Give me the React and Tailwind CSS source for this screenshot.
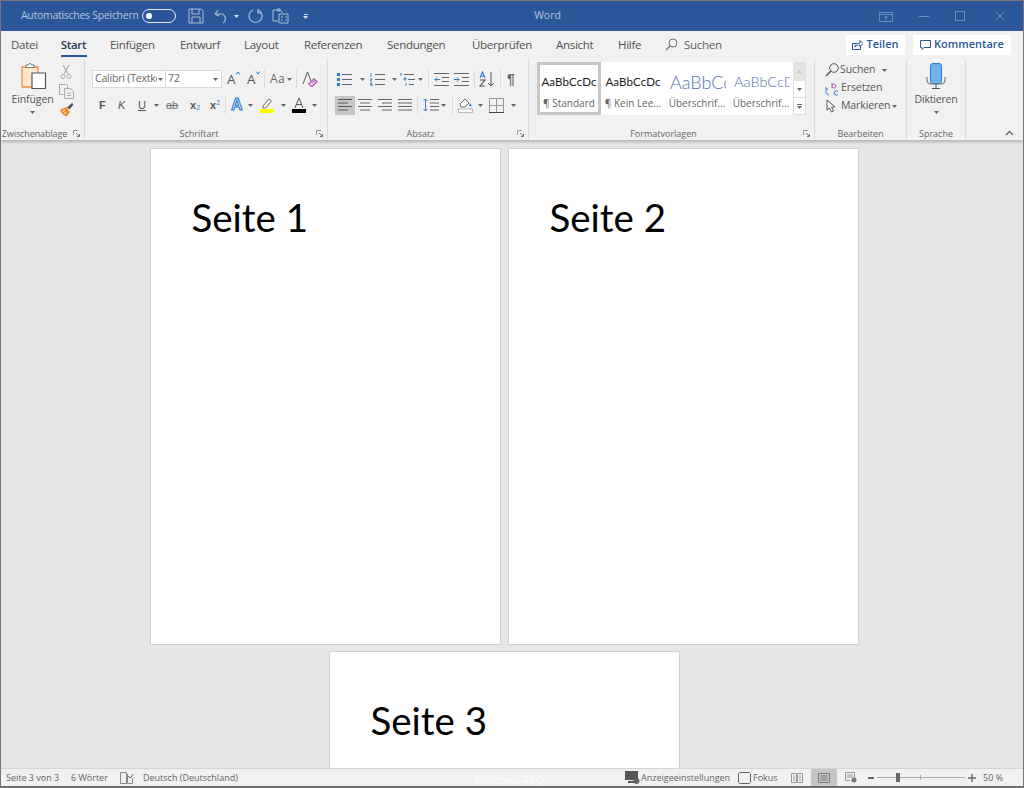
import React from "react";

const Ic = ({ w = 16, h = 16, ml = "", className = "", children, ...r }) => (
  <svg width={w} height={h} viewBox={`0 0 ${w} ${h}`} fill="none" className={`shrink-0 ${ml} ${className}`} {...r}>{children}</svg>
);
const Caret = ({ className = "", color = "#666" }) => (
  <svg width="5" height="3" viewBox="0 0 5 3" className={`shrink-0 ${className}`}><path d="M0 0h5L2.5 3z" fill={color} /></svg>
);
const Sep = ({ className = "" }) => <div className={`w-px h-[20px] bg-[#dcdcdc] shrink-0 ${className}`} />;
const Launcher = () => (
  <svg width="7" height="7" viewBox="0 0 7 7" className="shrink-0">
    <path d="M0.5 5V.5H5" stroke="#999" fill="none" /><path d="M3 3l3.5 3.5M6.5 4v2.5H4" stroke="#777" fill="none" />
  </svg>
);
const Lines = ({ rows, color = "#666" }) => rows.map(([x, y, l], i) => <path key={i} d={`M${x} ${y}h${l}`} stroke={color} />);

const Tab = ({ children, className = "" }) => <span className={`whitespace-nowrap ${className}`}>{children}</span>;

const Group = ({ w, label, launcher, labelClass = "", children }) => (
  <div className="flex flex-col shrink-0 h-full border-r border-[#dadada] my-0" style={{ width: w }}>
    <div className="h-[68px]">{children}</div>
    <div className="h-[12px] relative flex items-center justify-center text-[9px] leading-none text-[#666]">
      <span className={labelClass}>{label}</span>
      {launcher && <span className="absolute right-[4px] top-[3px] flex"><Launcher /></span>}
    </div>
  </div>
);

const BoldA = ({ up, ml }) => (
  <span className={`relative w-[14px] h-[16px] shrink-0 text-[13.5px] leading-[16px] text-[#555] ${ml}`}>
    A
    <svg width="6" height="4" viewBox="0 0 6 4" className="absolute top-0 left-[8px]">
      <path d={up ? "M1 3.500L3 1l2 2.500" : "M1 .5L3 3l2-2.500"} stroke="#2b7cd3" fill="none" />
    </svg>
  </span>
);

const Style = ({ sample, name, cls, selected, w }) => (
  <div className={`flex flex-col items-center overflow-hidden shrink-0 h-full ${selected ? "border-[3px] border-[#c6c6c6]" : "border-[3px] border-white"}`} style={{ width: w }}>
    <div className={`h-[32px] pt-[2px] flex items-center justify-center whitespace-nowrap overflow-hidden w-full ${cls}`}>{sample}</div>
    <div className="text-[10px] leading-[12px] text-[#666] whitespace-nowrap">{name}</div>
  </div>
);

export default function App() {
  return (
    <div className="w-[1024px] h-[788px] overflow-hidden flex flex-col relative bg-[#e6e6e6] border-x border-x-[#777] border-t border-t-[#777] border-b-2 border-b-[#6e6e6e] font-['Open_Sans','Noto_Sans',sans-serif]">
      {/* Title bar */}
      <div className="h-[30px] shrink-0 bg-[#2b579a] flex items-center text-[10.5px] relative">
        <span className="ml-[20px] w-[118px] whitespace-nowrap text-[#b3c3dc] tracking-[-0.28px]">Automatisches Speichern</span>
        <div className="ml-[3px] w-[34px] h-[14px] rounded-full border border-[#e6ecf5] flex items-center pl-[3px]">
          <div className="w-[6px] h-[6px] rounded-full bg-white" />
        </div>
        <Ic w={16} h={16} ml="ml-[12px]">
          <path d="M1 1h12l2 2v12H1z M4 1v5h7V1 M4 15V9h8v6" stroke="#a9bbd6" />
        </Ic>
        <Ic w={15} h={15} ml="ml-[10px]">
          <path d="M4 1L1 5l4 2M1.5 5H8a5 5 0 0 1 1 9" stroke="#a9bbd6" strokeWidth="1.2" />
        </Ic>
        <Caret color="#d5deec" className="ml-[5px]" />
        <Ic w={16} h={16} ml="ml-[8px]">
          <path d="M5 2a6.5 6.5 0 1 0 5 0M5 1v4H1" stroke="#a9bbd6" strokeWidth="1.2" transform="matrix(-1 0 0 1 16 0)" />
        </Ic>
        <Ic w={17} h={16} ml="ml-[9px]">
          <path d="M1 2h7l2 2v1M1 2v11h5M5 1h3v2H5 M7 6h9v9H7z M9 9h2M9 12h2M13 9h2M13 12h2" stroke="#a9bbd6" />
        </Ic>
        <div className="ml-[14px] flex flex-col items-center gap-[1px]">
          <div className="w-[4px] h-px bg-[#d5deec]" />
          <Caret color="#d5deec" />
        </div>
        <div className="flex-1 flex justify-center pr-[92px]">
          <span className="text-[#b3c3dc] text-[10.5px]">Word</span>
        </div>
        <Ic w={14} h={12} ml="mr-[26px]">
          <path d="M.5 2.5h13v9H.5zM.5 4.5h13M7 10.5V6M5 8l2-2 2 2" stroke="#6f8dbb" />
        </Ic>
        <div className="w-[10px] h-px bg-[#6f8dbb] mr-[26px]" />
        <div className="w-[10px] h-[10px] border border-[#6f8dbb] mr-[30px]" />
        <Ic w={10} h={10} ml="mr-[18px]">
          <path d="M.5.5l9 9M9.5.5l-9 9" stroke="#6f8dbb" />
        </Ic>
      </div>

      {/* Tabs */}
      <div className="h-[27px] shrink-0 bg-[#f1f1f1] flex items-center text-[11.5px] text-[#505050] tracking-[-0.28px]">
        <Tab className="ml-[10px] w-[26px]">Datei</Tab>
        <div className="ml-[23px] w-[27px] h-[27px] flex flex-col items-center justify-between pt-[6px]">
          <span className="font-semibold text-[#2b3a55] text-[11.5px] leading-[16px] whitespace-nowrap">Start</span>
          <div className="w-[26px] h-[2.5px] bg-[#2b579a] mb-[1px]" />
        </div>
        <Tab className="ml-[23px] w-[70px]">Einfügen</Tab>
        <Tab className="w-[64px]">Entwurf</Tab>
        <Tab className="w-[60px]">Layout</Tab>
        <Tab className="w-[83px]">Referenzen</Tab>
        <Tab className="w-[85px]">Sendungen</Tab>
        <Tab className="w-[84px]">Überprüfen</Tab>
        <Tab className="w-[62px]">Ansicht</Tab>
        <Tab className="w-[47px]">Hilfe</Tab>
        <Ic w={13} h={13}>
          <circle cx="8" cy="5" r="4" stroke="#707070" /><path d="M5 8l-4 4" stroke="#707070" strokeWidth="1.3" />
        </Ic>
        <Tab className="ml-[6px] text-[#606060]">Suchen</Tab>
        <div className="flex-1" />
        <div className="w-[59px] h-[20px] bg-white flex items-center justify-center gap-[3px] text-[#2b579a] font-semibold text-[11px] tracking-normal">
          <Ic w={11} h={11}><path d="M.5 4.5h4M.5 4.5v6h8V7M3 8c0-3 2-4 5-4V1.5l3 3-3 3V6C6 6 4.5 6.5 3 8z" stroke="#2b579a" /></Ic>
          Teilen
        </div>
        <div className="ml-[8px] mr-[12px] w-[98px] h-[20px] bg-white flex items-center justify-center gap-[3px] text-[#2b579a] font-semibold text-[11px] tracking-normal">
          <Ic w={11} h={11}><path d="M.5 1.5h10v7H4L2 10.500V8.500H.5z" stroke="#2b579a" /></Ic>
          Kommentare
        </div>
      </div>

      {/* Ribbon */}
      <div className="h-[82px] shrink-0 bg-[#f1f1f1] flex items-stretch py-[1px] relative z-10 shadow-[0_2px_3px_rgba(0,0,0,0.22)]">
        {/* Zwischenablage */}
        <Group w={84} label="Zwischenablage" launcher labelClass="-ml-[16px] tracking-[-0.1px]">
          <div className="flex h-full">
            <div className="w-[53px] ml-[5px] flex flex-col items-center pt-[4px]">
              <Ic w={26} h={28} ml="ml-[2px]">
                <path d="M1 4h16v20H1z" fill="#fce6cf" stroke="#e8913f" strokeWidth="1.3" />
                <path d="M5 4V2h2.500a1.500 1.500 0 0 1 3 0H13v2.500H5z" fill="#fff" stroke="#777" />
                <path d="M11 10h13.500v15.500H11z" fill="#fff" stroke="#555" strokeWidth="1.2" />
              </Ic>
              <span className="text-[10.5px] leading-[13px] mt-[2px] text-[#555] whitespace-nowrap tracking-[-0.1px]">Einfügen</span>
              <Caret className="mt-[5px]" />
            </div>
            <div className="flex flex-col items-start pt-[5px]">
              <Ic w={12} h={16} ml="ml-[1px]">
                <path d="M3 1l5 9M9 1l-5 9" stroke="#aaa" strokeWidth="1.1" />
                <circle cx="3" cy="12.500" r="2" stroke="#aaa" /><circle cx="9" cy="12.500" r="2" stroke="#aaa" />
              </Ic>
              <Ic w={15} h={15} ml="mt-[4px]">
                <path d="M.5.5h7l1 1V4M.5.5v10h4" stroke="#aaa" /><path d="M5.500 4.500h6l3 3v7h-9z M8 9h4M8 11.500h4" stroke="#aaa" />
              </Ic>
              <Ic w={15} h={15} ml="mt-[3px]">
                <path d="M1 8l6-3 4 5-3 4C6 14 3 13 1 8z" fill="#ed8b2b" /><path d="M3.500 9.500L6 8M5 12l2-2" stroke="#fff" />
                <path d="M8 5.500L13 1l1.500 1.500-4 5z" fill="#555" />
              </Ic>
            </div>
          </div>
        </Group>

        {/* Schriftart */}
        <Group w={243} label="Schriftart" launcher labelClass="-ml-[14px]">
          <div className="flex items-center h-[20px] mt-[10px] pl-[7px]">
            <div className="w-[74px] h-[18px] bg-white border border-[#d9d9d9] flex items-center pl-[2px] pr-[2px] text-[10.5px] text-[#666] overflow-hidden">
              <span className="w-[63px] mr-[1px] overflow-hidden whitespace-nowrap tracking-[-0.2px]">Calibri (Textkö</span>
              <Caret />
            </div>
            <div className="w-[56px] h-[18px] bg-white border border-[#d9d9d9] border-l-0 flex items-center justify-between pl-[2px] pr-[3px] text-[10.5px] text-[#666]">
              72<Caret />
            </div>
            <BoldA up ml="ml-[5px]" />
            <BoldA ml="ml-[6px]" />
            <Sep className="ml-[3px] !h-[18px]" />
            <span className="ml-[5px] text-[12px] text-[#666] leading-none tracking-[0.5px]">Aa</span>
            <Caret className="ml-[2px]" />
            <Sep className="ml-[4px] !h-[18px]" />
            <Ic w={16} h={16} ml="ml-[5px]">
              <path d="M1 13L5.500 1 9 10" stroke="#555" />
              <path d="M7 13l5-5 3 2.500-4.500 4.500H9z" fill="#fff" stroke="#b455b0" strokeWidth="1.4" />
              <path d="M10 13l-1.500-1.500 3.500-3.500 2 2z" fill="#d18ad0" />
            </Ic>
          </div>
          <div className="flex items-center h-[20px] mt-[6px] pl-[14px] text-[#555]">
            <span className="w-[8px] text-[11px] font-bold leading-none font-['Liberation_Sans']">F</span>
            <span className="ml-[11px] w-[8px] text-[11px] italic leading-none font-['Liberation_Sans']">K</span>
            <span className="ml-[12px] w-[10px] text-[11px] underline leading-none font-['Liberation_Sans']">U</span>
            <Caret className="ml-[6px]" />
            <span className="ml-[7px] w-[14px] text-[11px] line-through leading-none text-[#777] font-['Liberation_Sans']">ab</span>
            <span className="ml-[10px] w-[12px] text-[11px] font-bold leading-none font-['Liberation_Sans']">x<sub className="text-[7px] text-[#2b7cd3] font-normal">2</sub></span>
            <span className="ml-[8px] w-[12px] text-[11px] font-bold leading-none font-['Liberation_Sans']">x<sup className="text-[7px] text-[#2b7cd3] font-normal">2</sup></span>
            <Sep className="ml-[3px] !h-[17px]" />
            <span className="ml-[5px] w-[14px] text-[16px] font-bold leading-none text-[#cfe2f6] [-webkit-text-stroke:1px_#2b7cd3] font-['Liberation_Sans']">A</span>
            <Caret className="ml-[3px]" />
            <Ic w={14} h={16} ml="ml-[7px]">
              <path d="M3 9l6-7 2.500 2-6 7H3z" fill="#fff" stroke="#666" />
              <rect x="0" y="12" width="14" height="4" fill="#ffff00" />
            </Ic>
            <Caret className="ml-[7px]" />
            <Ic w={14} h={16} ml="ml-[6px]">
              <path d="M3 11L7 1l4 10M4.500 7.500h5" stroke="#555" />
              <rect x="0" y="12" width="14" height="4" fill="#000" />
            </Ic>
            <Caret className="ml-[6px]" />
          </div>
        </Group>

        {/* Absatz */}
        <Group w={201} label="Absatz" launcher labelClass="-ml-[15px]">
          <div className="flex items-center h-[20px] mt-[10px] pl-[9px]">
            <Ic w={15} h={13}>
              <rect x="0" y="0" width="3" height="3" fill="#2b7cd3" /><rect x="0" y="5" width="3" height="3" fill="#2b7cd3" /><rect x="0" y="10" width="3" height="3" fill="#2b7cd3" />
              <Lines rows={[[5, 1.5, 10], [5, 6.5, 10], [5, 11.5, 10]]} />
            </Ic>
            <Caret className="ml-[8px]" />
            <Ic w={15} h={13} ml="ml-[5px]">
              <path d="M1 0v4M0 6h2v1H0v1h2M0 10h2v3H0M0 11.500h2" stroke="#2b7cd3" strokeWidth=".8" />
              <Lines rows={[[5, 1.5, 10], [5, 6.5, 10], [5, 11.5, 10]]} />
            </Ic>
            <Caret className="ml-[7px]" />
            <Ic w={15} h={13} ml="ml-[3px]">
              <path d="M1 0v3M4 5h2v2H4zM6 10v3" stroke="#2b7cd3" strokeWidth=".9" />
              <Lines rows={[[4, 1.5, 10], [8, 6.5, 7], [9, 11.5, 5]]} />
            </Ic>
            <Caret className="ml-[3px]" />
            <Sep className="ml-[5px] !h-[18px]" />
            <Ic w={15} h={13} ml="ml-[5px]">
              <Lines rows={[[0, .5, 15], [8, 4.500, 7], [8, 8.500, 7], [0, 12.500, 15]]} />
              <path d="M6 6.500H1M3 4.500l-2 2 2 2" stroke="#2b7cd3" />
            </Ic>
            <Ic w={15} h={13} ml="ml-[5px]">
              <Lines rows={[[0, .5, 15], [8, 4.500, 7], [8, 8.500, 7], [0, 12.500, 15]]} />
              <path d="M0 6.500h5M3 4.500l2 2-2 2" stroke="#2b7cd3" />
            </Ic>
            <Sep className="ml-[5px] !h-[18px]" />
            <Ic w={16} h={16} ml="ml-[4px]">
              <path d="M1 7l2.500-6L6 7M2 5h3" stroke="#2b7cd3" strokeWidth="1.1" />
              <path d="M1 9h5L1 15h5" stroke="#555" strokeWidth="1.1" />
              <path d="M12 1v14M9 12l3 3 3-3" stroke="#555" />
            </Ic>
            <Sep className="ml-[5px] !h-[18px]" />
            <span className="ml-[6px] text-[14px] font-bold leading-none text-[#666] font-['Liberation_Sans']">¶</span>
          </div>
          <div className="flex items-center h-[20px] mt-[6px] pl-[7px]">
            <div className="w-[20px] h-[19px] bg-[#c6c6c6] flex items-center justify-center">
              <Ic w={14} h={12}><Lines rows={[[0, .5, 14], [0, 4, 10], [0, 7.500, 14], [0, 11, 10]]} color="#555" /></Ic>
            </div>
            <Ic w={14} h={12} ml="ml-[3px]"><Lines rows={[[0, .5, 14], [2, 4, 10], [0, 7.500, 14], [2, 11, 10]]} /></Ic>
            <Ic w={14} h={12} ml="ml-[6px]"><Lines rows={[[0, .5, 14], [4, 4, 10], [0, 7.500, 14], [4, 11, 10]]} /></Ic>
            <Ic w={14} h={12} ml="ml-[6px]"><Lines rows={[[0, .5, 14], [0, 4, 14], [0, 7.500, 14], [0, 11, 14]]} /></Ic>
            <Sep className="ml-[5px] !h-[18px]" />
            <Ic w={16} h={14} ml="ml-[5px]">
              <path d="M2.500 1v12M.5 3l2-2 2 2M.5 11l2 2 2-2" stroke="#2b7cd3" />
              <Lines rows={[[7, 1.500, 9], [7, 5, 9], [7, 8.500, 9], [7, 12, 9]]} />
            </Ic>
            <Caret className="ml-[2px]" />
            <Sep className="ml-[6px] !h-[18px]" />
            <Ic w={15} h={16} ml="ml-[5px]">
              <path d="M2 7l5-5 4 4-4 4H3z" fill="#fff" stroke="#666" />
              <path d="M12 6l2 3h-3z" fill="#2b7cd3" />
              <rect x=".5" y="12" width="14" height="3.500" fill="#fff" stroke="#bbb" />
            </Ic>
            <Caret className="ml-[5px]" />
            <Ic w={15} h={15} ml="ml-[6px]">
              <path d="M.5.5h14v14H.5zM7.500.5v14M.5 7.500h14" stroke="#999" /><path d="M0 14.500h15" stroke="#444" />
            </Ic>
            <Caret className="ml-[7px]" />
          </div>
        </Group>

        {/* Formatvorlagen */}
        <Group w={286} label="Formatvorlagen" launcher labelClass="-ml-[16px]">
          <div className="flex pl-[8px] pt-[3px] h-[56px]">
            <div className="w-[256px] h-[53px] bg-white flex items-stretch">
              <Style w={64} selected sample="AaBbCcDc" name="¶ Standard" cls="text-[11.5px] text-[#222] font-['Lato','Open_Sans',sans-serif] tracking-[0.1px]" />
              <Style w={64} sample="AaBbCcDc" name="¶ Kein Lee..." cls="text-[11.5px] text-[#222] font-['Lato','Open_Sans',sans-serif] tracking-[0.1px]" />
              <Style w={64} sample="AaBbCc" name="Überschrif..." cls="text-[18px] font-light text-[#4f74b3] !justify-start pl-[2px] font-['Lato','Open_Sans',sans-serif]" />
              <Style w={64} sample="AaBbCcD" name="Überschrif..." cls="text-[14.5px] font-light text-[#4f74b3] !justify-start pl-[2px] font-['Lato','Open_Sans',sans-serif]" />
            </div>
            <div className="w-[13px] h-[53px] flex flex-col">
              <div className="h-[19px] bg-[#e3e3e3] flex items-center justify-center"><Caret color="#c4c4c4" className="rotate-180" /></div>
              <div className="h-[17px] bg-white border-x border-b border-[#ddd] flex items-center justify-center"><Caret /></div>
              <div className="h-[17px] bg-white border-x border-b border-[#ddd] flex flex-col items-center justify-center gap-[1px]"><div className="w-[5px] h-px bg-[#666]" /><Caret /></div>
            </div>
          </div>
        </Group>

        {/* Bearbeiten */}
        <Group w={92} label="Bearbeiten">
          <div className="flex flex-col pl-[10px] pt-[1px] text-[10.5px] text-[#555] tracking-[-0.1px]">
            <div className="flex items-center h-[18px] mt-[1px]">
              <Ic w={14} h={14}><circle cx="9" cy="5" r="4.300" stroke="#555" /><path d="M6 8l-5 5" stroke="#555" strokeWidth="1.400" /></Ic>
              <span className="ml-[1px]">Suchen</span><Caret className="ml-[7px]" />
            </div>
            <div className="flex items-center h-[18px]">
              <Ic w={14} h={15}>
                <path d="M7 2v5M7 4.500a2 2 0 1 1 0 1" stroke="#b455b0" />
                <path d="M13 10.500a2.200 2.200 0 1 0 0 3" stroke="#2b7cd3" />
                <path d="M4 14C1 13 0 10 1.500 8M3 8H1V6" stroke="#2b7cd3" />
              </Ic>
              <span className="ml-[2px]">Ersetzen</span>
            </div>
            <div className="flex items-center h-[18px]">
              <Ic w={11} h={14} ml="ml-[1px]"><path d="M1 1v10l2.500-2 2 4 2-1-2-4H9z" fill="#fff" stroke="#555" /></Ic>
              <span className="ml-[4px]">Markieren</span><Caret className="ml-[2px]" />
            </div>
          </div>
        </Group>

        {/* Sprache */}
        <Group w={59} label="Sprache">
          <div className="flex flex-col items-center pt-[4px]">
            <Ic w={20} h={27}>
              <rect x="4.500" y=".5" width="11" height="20" rx="2.500" fill="#73b4ea" stroke="#2b7cd3" />
              <path d="M1 14v3a4 4 0 0 0 4 4h10a4 4 0 0 0 4-4v-3" stroke="#777" strokeWidth="1.200" />
              <path d="M10 21v4M6 25.500h8" stroke="#555" />
            </Ic>
            <span className="text-[10.5px] leading-[13px] mt-[3px] text-[#555] tracking-[-0.2px]">Diktieren</span>
            <Caret className="mt-[5px]" />
          </div>
        </Group>
        <div className="flex-1 flex items-end justify-end pr-[9px] pb-[3px]">
          <Ic w={9} h={6}><path d="M1 5l3.500-3.500L8 5" stroke="#666" strokeWidth="1.300" /></Ic>
        </div>
      </div>

      {/* Document */}
      <div className="flex-1 min-h-0 overflow-hidden flex flex-wrap content-start justify-center gap-x-[7px] gap-y-[6px] pt-[8px] pr-[16px] bg-[#e6e6e6]">
        {["Seite 1", "Seite 2"].map((t) => (
          <div key={t} className="w-[351px] h-[497px] bg-white border border-[#d2d2d2] pl-[41px] pt-[41px] text-[38.5px] leading-[54px] text-black font-['Lato',sans-serif]">{t}</div>
        ))}
        <div className="w-[351px] h-[200px] bg-white border border-[#d2d2d2] pl-[41px] pt-[41px] text-[38.5px] leading-[54px] text-black font-['Lato',sans-serif]">Seite 3</div>
      </div>

      {/* Status bar */}
      <div className="h-[18px] shrink-0 bg-[#f1f1f1] border-t border-[#d4d4d4] flex items-center text-[9px] text-[#666] relative">
        <span className="ml-[5px] w-[65px] whitespace-nowrap">Seite 3 von 3</span>
        <span className="w-[49px] whitespace-nowrap">6 Wörter</span>
        <Ic w={14} h={12}><path d="M.5.5h6v11h-6zM7.500 2v9.500h5V6" stroke="#888" /><path d="M8 4l2 2 3.500-4" stroke="#666" /></Ic>
        <span className="ml-[9px] whitespace-nowrap">Deutsch (Deutschland)</span>
        <div className="flex-1" />
        <Ic w={15} h={13}><rect x="0" y="0" width="13" height="9" fill="#555" /><circle cx="11.500" cy="10" r="3" fill="#666" /><path d="M3 11h6" stroke="#555" strokeWidth="2" /></Ic>
        <span className="whitespace-nowrap w-[88px] ml-[1px]">Anzeigeeinstellungen</span>
        <Ic w={13} h={12} ml="ml-[9px]"><path d="M1.500.5h10l1 1v9l-1 1h-10l-1-1v-9z" stroke="#666" /></Ic>
        <span className="ml-[2px] w-[25px]">Fokus</span>
        <Ic w={12} h={10} ml="ml-[13px]"><path d="M.5.5h5v9h-5zM6.500.5h5v9h-5zM2 3h2M2 5h2M2 7h2M8 3h2M8 5h2M8 7h2" stroke="#999" /></Ic>
        <div className="ml-[8px] w-[26px] h-[17px] bg-[#c6c6c6] flex items-center justify-center">
          <Ic w={12} h={10}><path d="M.5.5h11v9H.5zM2.500 3h7M2.500 5h7M2.500 7h7" stroke="#777" /></Ic>
        </div>
        <Ic w={12} h={11} ml="ml-[8px]"><path d="M.5.5h9v8H6M.5.5v8H5M2 3h6M2 5h6" stroke="#999" /><circle cx="9" cy="8" r="2.500" fill="#777" /></Ic>
        <div className="ml-[11px] w-[6px] h-[2px] bg-[#666]" />
        <div className="ml-[3px] w-[88px] h-px bg-[#aaa] relative">
          <div className="absolute left-[19px] -top-[4px] w-[4px] h-[9px] bg-[#666]" />
          <div className="absolute left-[43px] -top-[2px] w-px h-[5px] bg-[#aaa]" />
        </div>
        <Ic w={8} h={8} ml="ml-[3px]"><path d="M4 0v8M0 4h8" stroke="#666" strokeWidth="1.400" /></Ic>
        <span className="ml-[7px] w-[21px] whitespace-nowrap">50 %</span>
        <div className="w-[19px]" />
      </div>
      <span className="absolute left-[472px] bottom-0 text-[11px] leading-[12px] text-[#fbfbfb] whitespace-nowrap">Windows-FAQ</span>
    </div>
  );
}
